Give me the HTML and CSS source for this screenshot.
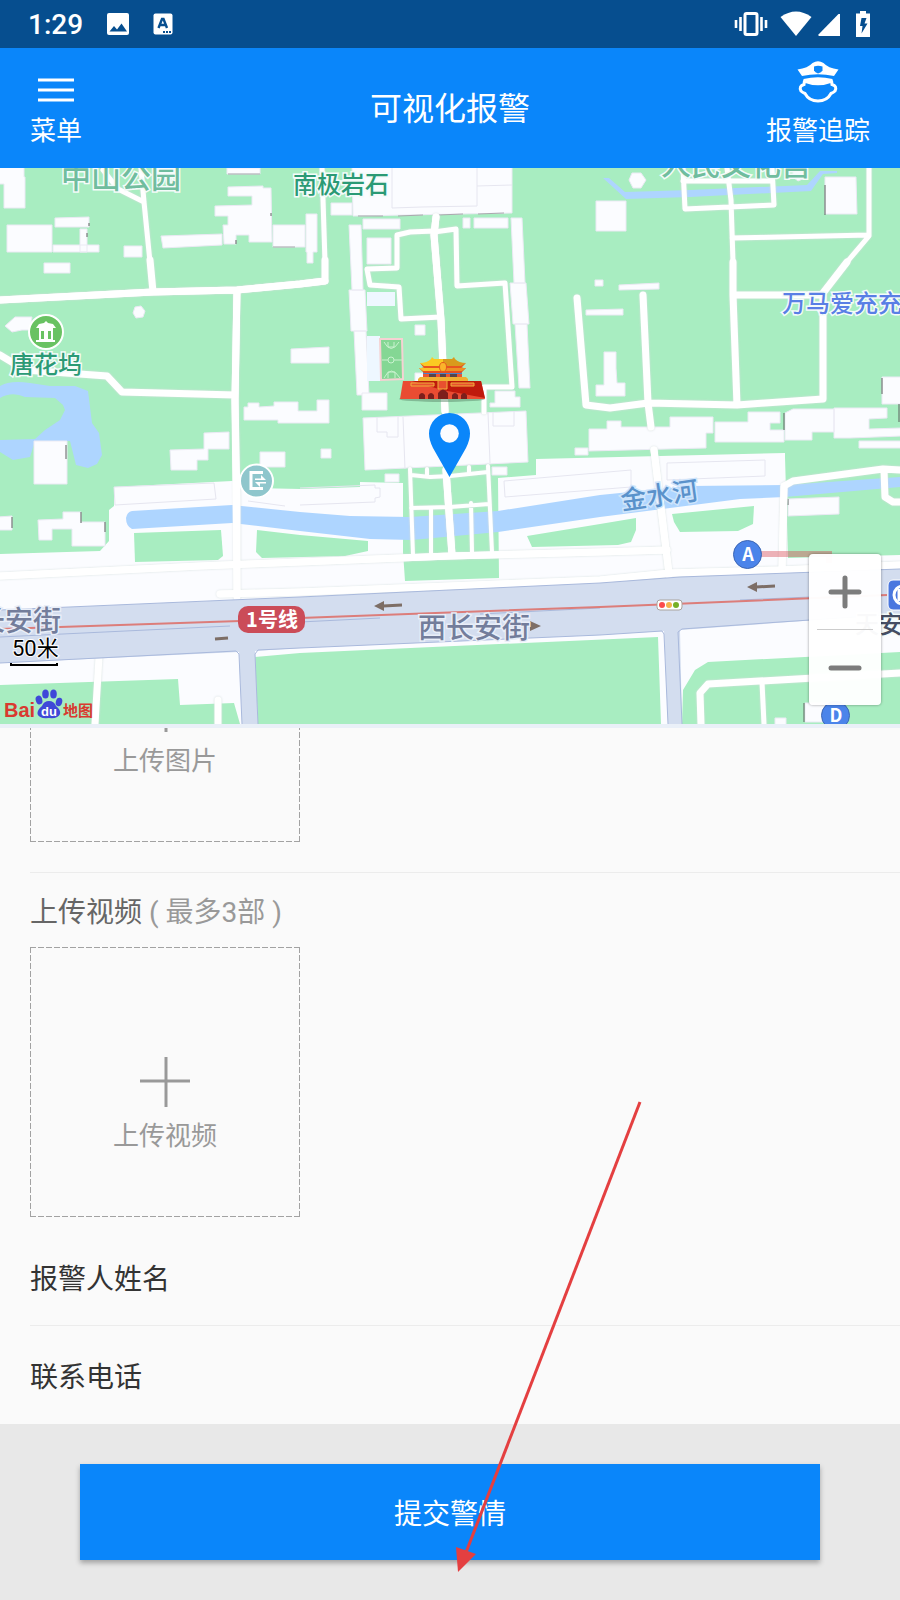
FILE: index.html
```html
<!DOCTYPE html>
<html lang="zh-CN">
<head>
    <meta charset="UTF-8">
    <meta name="viewport" content="width=device-width, initial-scale=1.0">
    <title>可视化报警</title>
    <link rel="stylesheet" href="styles.css">
</head>
<body>

<!-- 状态栏 -->
<div class="status-bar">
    <div class="status-left">
        <span class="clock">1:29</span>
        <svg width="24" height="24" viewBox="0 0 24 24">
            <rect x="1" y="1" width="22" height="22" rx="2" fill="#fff"/>
            <path d="M3.500 19.500 L8 14 L11 17.500 L15.500 11.500 L21 19.500 Z" fill="#064e8f"/>
        </svg>
        <svg width="20" height="24" viewBox="0 0 20 24">
            <rect x="0.500" y="1.500" width="19" height="21" rx="2" fill="#fff"/>
            <path d="M5.500 16 L9 7 H10.500 L14 16 M7 13 H12.500" fill="none" stroke="#064e8f" stroke-width="2.400"/>
            <path d="M10 20 H12 M13 20 H15 M16 20 H18" stroke="#064e8f" stroke-width="2"/>
        </svg>
    </div>
    <div class="status-right">
        <svg width="34" height="26" viewBox="0 0 34 26">
            <rect x="11" y="2.500" width="12" height="21" rx="1.500" fill="none" stroke="#fff" stroke-width="3"/>
            <path d="M6.500 6 V20 M2 9 V17 M27.500 6 V20 M32 9 V17" stroke="#fff" stroke-width="2.600"/>
        </svg>
        <svg width="32" height="26" viewBox="0 0 32 26">
            <path d="M0.500 6 Q16 -5 31.500 6 L16 25 Z" fill="#fff"/>
        </svg>
        <svg width="22" height="24" viewBox="0 0 22 24">
            <path d="M22 2 V24 H1 Q0 23.500 0.500 22.500 L20.500 2 Z" fill="#fff"/>
        </svg>
        <svg class="battery" width="14" height="26" viewBox="0 0 14 26">
            <path d="M4 0 H10 V2.500 H14 V26 H0 V2.500 H4 Z" fill="#fff"/>
            <path d="M5.500 7 H10.500 L8.500 12.500 H11.500 L5.500 22.500 L6.500 15 H4 Z" fill="#064e8f"/>
        </svg>
    </div>
</div>

<!-- 页面头部 -->
<header class="header">
    <button type="button" class="nav-button">
        <svg width="36" height="44" viewBox="0 0 36 44">
            <path d="M0 20 H36 M0 30 H36 M0 40 H36" transform="translate(0 -1)" stroke="#fff" stroke-width="3"/>
        </svg>
        <span>菜单</span>
    </button>
    <h1>可视化报警</h1>
    <button type="button" class="nav-button nav-right">
        <svg width="42" height="44" viewBox="0 0 42 44">
            <path d="M0.500 8.500 Q11 7 15.500 2 Q21 -1.500 26.500 2 Q31 7 41.500 8.500 L37 15 Q21 11.500 5 15 Z" fill="#fff"/>
            <path d="M17 5.500 Q21 4 25.500 5.500 V9.500 Q24.500 11.500 21 12.500 Q18 11.500 17 9.500 Z" fill="#0a86fa"/>
            <path d="M6.500 18 Q21 14.500 35.500 18 V21.500 Q21 27 6.500 21.500 Z" fill="#fff"/>
            <path d="M7.500 19.500 L7 23.500 Q1.500 25 4 30 Q5.500 31.500 8 32.500 Q12 40 21 40 Q30 40 34 32.500 Q36.500 31.500 38 30 Q40.500 25 35 23.500 L34.500 19.500" fill="none" stroke="#fff" stroke-width="3"/>
        </svg>
        <span>报警追踪</span>
    </button>
</header>

<!-- 地图 -->
<section class="map">
    <svg class="map-canvas" viewBox="0 168 900 556">
        <rect x="0" y="168" width="900" height="556" fill="#a8edc1"/>

        <!-- 街区底色 -->
        <path fill="#fbfcff" d="M0 554 L100 551 L109 541 V510 L114 506 V487 L232 481 L252 488 L300 489 L360 487 V482 L403 483 V552 L405 581 L499 578 L498 478 L536 475 V459 L785 453 L785 457 L788 558 L900 555 V652 L708 662 L695 670 L683 690 L682 724 H661 L658 637 L300 653 L255 657 L258 724 H240 L234 703 L180 705 L178 679 L0 685 Z"/>
        <g fill="#a8edc1">
            <path d="M134 533 L221 530 L223 556 L218 560 L135 562 Z"/>
            <path d="M257 530 L300 535 L368 541 V551 L345 556 L262 558 L256 552 Z"/>
            <path d="M527 536 L600 524 L636 518 V530 L631 542 L618 545 L532 547 Z"/>
            <path d="M672 514 L754 506 L753 524 L738 531 L680 532 L674 522 Z"/>
        </g>
        <path d="M403 466 H498 V556 L404 558 Z" fill="#a8edc1"/>

        <!-- 水系 -->
        <g fill="#aed5ff">
            <path d="M132 511 L232 505 L300 512 L350 516 L410 517 L498 511 L600 495 L690 486 L785 485 L900 477 V487 L785 497 L740 499 L600 517 L498 532 L412 540 L370 539 L300 531 L232 523 L132 529 Q126 526 126 518 Q127 512 132 511 Z"/>
            <path d="M0 386 Q10 380 30 383 L50 386 H75 L88 391 L92 423 L99 433 L102 455 L97 464 L88 468 L76 465 L70 441 H35 L30 457 L13 460 L0 452 Z"/>
            <path d="M603 178 H609 L625 192 L690 190 L807 185 L820 171 H837 V173 L823 174 L811 191 L690 197 L626 199 Z"/>
        </g>
        <path d="M0 398 Q12 391 25 397 L55 398 L63 405 L65 410 L60 420 L45 430 L35 439 L0 440 Z" fill="#a8edc1"/>

        <!-- 建筑 -->
        <g fill="#fbfcff" stroke="#ebeaf4">
            <path d="M-2 167 H24 V177 H25 V208 H4 V184 H-2 Z"/>
            <path d="M7 225 H52 V252 H7 Z M55 218 L89 217 V227 H55 Z M80 229 H87 V252 H80 Z M53 245 H99 V252 H53 Z M124 246 H142 V257 H124 Z M44 263 H70 V273 H44 Z"/>
            <path d="M161 236 L222 234 V245 L163 248 Z M273 225 H305 V247 H273 Z M306 214 H317 V252 H313 V263 H307 V252 H306 Z M227 168 H260 V174 H227 Z"/>
            <path d="M228 187 L263 186 V188 H271 L272 242 H249 V235 H236 V244 H224 L223 225 H228 V216 H215 V206 L252 205 V196 H228 Z"/>
            <path d="M5 326 L15 317 H32 L30 330 H22 L12 332 Z M135 307 L141 306 L145 311 L143 317 L136 318 L133 313 Z"/>
            <path d="M34 441 H67 V484 H34 Z M204 433 L229 432 V449 H208 V460 H197 V470 H171 L170 450 L204 449 Z"/>
            <path d="M-2 517 L12 516 V530 H-2 Z M38 520 L63 519 V512 H81 V522 H105 V546 H72 V529 H52 V540 H39 Z M260 452 H285 V467 H260 Z"/>
            <path d="M291 349 L329 347 V363 H291 Z M244 407 H248 V403 H259 V407 L274 406 V402 H298 V411 H317 V400 H329 V423 H278 V420 H244 Z"/>
            <path d="M331 203 H352 V215 H331 Z M352 167 H512 V213 L353 216 Z M363 219 H400 V229 H363 Z M463 218 H470 V228 H463 Z M474 218 H508 V228 H474 Z"/>
            <path d="M349 225 H361 L363 290 H352 Z M349 290 H365 L367 331 H351 Z M354 331 H366 L369 395 H357 Z"/>
            <path d="M511 218 H522 L525 283 H514 Z M510 283 H526 L529 324 H513 Z M515 324 H527 L530 388 H519 Z"/>
            <path d="M367 238 H391 V264 H367 Z M415 325 H425 V335 H415 Z M415 373 H425 V383 H415 Z M362 393 H387 V410 H362 Z M495 391 H515 V397 H520 V407 H490 V403 H495 Z"/>
            <path d="M363 418 L526 411 L528 462 L365 470 Z M321 449 H331 V458 H321 Z M385 474 H399 V482 H385 Z M492 467 H507 V475 H492 Z M575 448 H588 V455 H575 Z"/>
            <path d="M632 173 H641 L646 180 L641 188 H633 L629 180 Z M793 168 H805 V178 L798 181 L793 177 Z M596 201 H626 V231 H596 Z M825 177 H856 L857 214 H825 Z"/>
            <path d="M619 285 L659 283 V289 L619 290 Z M586 310 L623 309 V315 H586 Z M595 280 H603 V286 H595 Z M604 352 H616 V368 L617 383 H625 V396 H596 V385 H604 Z M882 377 H902 V404 H882 Z"/>
            <path d="M589 429 H607 V421 H621 V427 H670 V417 H713 V433 H706 V448 L589 451 Z M715 422 H748 V412 H780 V423 H770 V430 H784 V442 H715 Z"/>
            <path d="M785 413 L793 409 H834 V432 H812 V440 H785 Z M834 408 H887 V418 L869 419 V429 L902 428 V436 L850 438 H834 Z M859 441 H902 V448 H859 Z"/>
            <path d="M788 499 L839 497 V514 L788 516 Z M775 718 H786 V726 H775 Z M805 703 H830 V722 H805 Z"/>
        </g>
        <g fill="none" stroke="#e6e6f0">
            <path d="M392 168 V208 L422 207 L477 206 V168 M477 186 L512 185 M403 417 L405 469 M488 413 L490 463 M377 417 V432 H387 V437 H398 V416 M493 412 V426 H514 V411"/>
            <path d="M114 487 L214 483 L216 499 L115 505 Z M248 501 L285 506 M300 505 L375 502 V498 L380 497 V488 H375 V485 L300 488 M504 481 L631 470 V487 L505 497 Z M667 463 L765 460 V476 L667 480 Z"/>
        </g>
        <path d="M358 216 H383 M398 216 L423 215 M438 215 L463 214 M478 214 L504 213 M273 247 H295 M228 174 H260" stroke="#a9a9ad"/>
        <path d="M825 185 V215 M784 413 V430 M882 378 V394 M899 404 V422 M89 223 V226 M87 233 V237 M271 213 V216 M236 240 V244 M66 445 V459 M81 512 V523 M105 522 V532 M12 517 V528 M804 703 V722 M788 499 V505" stroke="#5c605f"/>

        <!-- 球场 -->
        <path d="M367 292 H395 V306 H367 Z M367 336 H380 V381 H367 Z" fill="#eef7ff"/>
        <path d="M380 339 H402 L403 379 L381 380 Z" fill="#84d794" stroke="#f5d2d3" stroke-width="2"/>
        <g fill="none" stroke="#c9f2cf">
            <circle cx="391" cy="360" r="3"/>
            <path d="M382 360 H388 M394 360 H402 M384 342 Q391 355 399 342 M384 378 Q391 364 400 378 M388 342 V347 H394 V342 M388 378 V372 H395 V378"/>
        </g>

        <!-- 园区道路 -->
        <g class="road">
            <path stroke-width="5" d="M103 170 L118 189 L144 202 M141 168 L144 202 L150 262"/>
            <path stroke-width="7" d="M150 260 L153 292 M0 300 L153 292 L237 290 L300 284 L325 281 V260 M237 290 L235 400 L237 500 V597 M0 355 L25 370 L107 376 L122 392 L235 395"/>
            <path stroke-width="5" d="M325 262 L322 168 M434 231 L410 232 L397 235 V268 L367 269 L370 285 L399 287 L401 319 L441 317 M434 232 L456 229 L457 286 L505 283 L512 387 H484 V412"/>
            <path stroke-width="7" d="M436 217 L434 235 L441 320 L445 411 M577 298 L586 405 L610 408 L648 403 L737 405 L823 399 V293 L847 262 M643 295 L648 403 L651 427 M654 450 L669 575 M733 262 L733 295 L737 405 M733 295 H823"/>
            <path stroke-width="5" d="M847 262 L869 236 V168 M727 168 L731 200 L733 262 M732 238 L869 235 M683 168 L685 209 L774 205 L772 168 M683 181 H772"/>
            <path stroke-width="4" d="M410 469 L413 555 M431 508 V553 M471 503 L472 552 M488 466 L492 552 M411 475 L430 477 L450 476 L488 472 M411 508 L450 507 L489 504 M427 469 V477 M469 467 V474"/>
            <path stroke-width="7" d="M446 470 L452 555 M782 570 L784 486 L793 481 L883 469 L900 470 M884 470 L885 497 L893 502 H900"/>
            <path stroke-width="7" d="M0 576 L200 566 L300 562 L450 556 L600 552 L667 550 M220 594 L300 592 L600 580 L670 573 L780 570 L900 565"/>
            <path stroke-width="7" d="M99 657 L95 724 M218 700 V724 M701 724 L700 693 L708 684 L900 673"/>
            <path stroke-width="5" d="M762 682 L764 724"/>
        </g>
        <g class="road-top">
            <path stroke-width="7" d="M0 576 L200 566 L300 562 L450 556 L600 552 L667 550 M220 594 L300 592 L600 580 L670 573 L780 570 L900 565 M237 290 L235 400 L237 594 M654 450 L669 573 M782 570 L784 486 M0 300 L153 292 L237 290 L300 284 L325 281 M436 217 L434 235 L441 320 L445 411 M446 470 L452 555"/>
        </g>

        <!-- 西长安街 -->
        <path fill="#d3ddef" d="M0 610 L300 597 L600 583 L680 577 L900 569 V614 L680 630 L682 724 H668 L664 631 L600 635 L300 648 L255 651 L258 724 H242 L239 652 L0 663 Z"/>
        <path fill="none" stroke="#a9b9dc" d="M0 610 L300 597 L600 583 L680 577 L900 569 M0 663 L236 651 L239 654 L242 724 M258 724 L255 654 L258 650 L300 648 L600 635 L662 631 L664 634 L668 724 M682 724 L678 632 L682 629 L780 622 L900 614 M0 637 L230 626 M300 622 L380 618 M480 614 L600 608 M740 600 L810 597"/>
        <path d="M0 629 L240 621 L300 618 L600 607 L887 595" fill="none" stroke="#dc7d7a" stroke-width="2"/>
        <g fill="#7d6e66" stroke="#7d6e66">
            <path d="M374 606 L384 601 V611 Z M747 587 L757 582 V592 Z M541 626 L530 621 V631 Z" stroke="none"/>
            <path d="M383 606 L402 605 M756 587 L775 586 M215 639 L228 638" stroke-width="3"/>
        </g>

        <!-- 文字标注 -->
        <g class="label">
            <text x="61" y="188" font-size="30" fill="#70bd9e">中山公园</text>
            <text x="661" y="175" font-size="30" fill="#70bd9e">人民文化宫</text>
            <text x="293" y="193" font-size="24" fill="#2b9a75">南极岩石</text>
            <text x="10" y="373" font-size="24" fill="#2b9a75">唐花坞</text>
            <text x="782" y="312" font-size="24" fill="#597fe5">万马爱充充</text>
            <text x="622" y="510" font-size="26" fill="#5a92cb" class="label-water" transform="rotate(-8 622 510)">金水河</text>
            <text x="418" y="638" font-size="28" fill="#737d9b" class="label-street">西长安街</text>
            <text x="61" y="631" font-size="28" fill="#737d9b" class="label-street" text-anchor="end">长安街</text>
            <text x="855" y="633" font-size="24" fill="#454d63">天安门</text>
        </g>

        <!-- 兴趣点 -->
        <circle cx="46" cy="332" r="17" fill="#69c262" stroke="#fff" stroke-width="2"/>
        <path d="M36 328 L39 324 L44 323 L46 321 L48 323 L53 324 L56 328 H53 V340 H55 V342 H36 V340 H39 V328 Z" fill="#fff"/>
        <path d="M41 331 H44 V339 H41 Z M48 331 H51 V339 H48 Z" fill="#69c262"/>
        <circle cx="256.500" cy="481" r="16.500" fill="#8fc6cc" stroke="#fff" stroke-width="2"/>
        <path d="M263 472.500 H251 V488.500 H263" fill="none" stroke="#fff" stroke-width="3"/>
        <path d="M255 478.500 H261 V475 L266 480 H255 Z M266 482 H255 L260 487 V483.500 H266 Z" fill="#fff"/>

        <rect x="238" y="606" width="67" height="27" rx="10" fill="#cb4c58"/>
        <text x="272" y="627" class="badge-text" font-size="20">1号线</text>

        <path d="M761 554 H829 V563" fill="none" stroke="#d6404a" stroke-opacity="0.4" stroke-width="6"/>
        <g fill="#4b84ea" stroke="#3c66b4">
            <circle cx="747.500" cy="554.500" r="14"/>
            <circle cx="835.500" cy="715.500" r="14"/>
        </g>
        <text x="748" y="561" class="badge-text" font-size="18">A</text>
        <text x="836" y="722" class="badge-text" font-size="18">D</text>

        <rect x="657" y="600" width="25" height="10" rx="3" fill="#fff" stroke="#a9a39d"/>
        <circle cx="662" cy="605" r="3" fill="#fb4b4b"/>
        <circle cx="669" cy="605" r="3" fill="#f4b34a"/>
        <circle cx="676" cy="605" r="3" fill="#76b026"/>

        <rect x="888" y="580" width="30" height="30" rx="5" fill="#4a77df" stroke="#fff" stroke-width="1"/>
        <circle cx="903" cy="595" r="9" fill="none" stroke="#fff" stroke-width="3"/>
        <path d="M899 589 V601" stroke="#fff" stroke-width="3"/>

        <!-- 天安门 -->
        <ellipse cx="442" cy="399" rx="43" ry="3" fill="#5b8a6c" opacity="0.5"/>
        <path d="M403 381 H481 L485 399 H400 Z" fill="#ea4c32"/>
        <path d="M412 381 H481 L485 398 L442 390 Z" fill="#bf1a0c"/>
        <path d="M411 383 H434 V386 H411 Z M451 383 H474 V386 H451 Z M438 380 H447 V389 H438 Z" fill="#e8502f" stroke="#f0b13a"/>
        <path d="M438 399 V393 Q443 386 448 393 V399 Z M419 399 V395 Q422 391 425 395 V399 Z M428 399 V395 Q431 391 434 395 V399 Z M452 399 V395 Q455 391 458 395 V399 Z M461 399 V395 Q464 391 467 395 V399 Z" fill="#7d1f1c"/>
        <path d="M423 371 H462 V378 H423 Z" fill="#e95634"/>
        <path d="M423 371 H462 V374 H423 Z" fill="#4c83cd"/>
        <path d="M429 374 H436 V378 H429 Z M440 374 H446 V378 H440 Z M450 374 H457 V378 H450 Z" fill="#584449"/>
        <path d="M418 379 L420 377 H466 L468 379 V381 H418 Z" fill="#efb032"/>
        <path d="M419 368 Q424 368 426 366 H459 Q461 368 466 368 L461 373 H424 Z" fill="#e8501f"/>
        <path d="M419 368 Q424 368 426 366 H443 V371 H423 Z" fill="#fbc22a"/>
        <path d="M443 366 H459 Q461 368 466 368 L462 371 H443 Z" fill="#ec9124"/>
        <path d="M420 363 L425 365 H461 L466 363 L461 368 H424 Z" fill="#e8551f"/>
        <path d="M420 363 Q427 363 431 359 L432 357 L434 359 H443 V366 H424 Z" fill="#fbca22"/>
        <path d="M443 359 H452 L454 357 L455 359 Q459 363 466 363 L461 366 H443 Z" fill="#d99a1c"/>
        <ellipse cx="443" cy="367" rx="3.500" ry="4.500" fill="#fbb42b" stroke="#e4571f"/>

        <!-- 当前位置 -->
        <path d="M449.500 477 L433 448 Q429 440 429 433.500 A20.500 20.500 0 0 1 470 433.500 Q470 440 466 448 Z" fill="#0a86fa"/>
        <circle cx="449.500" cy="433.500" r="9.300" fill="#fbfcff"/>

        <!-- 比例尺 -->
        <text x="12" y="656" class="scale-text" font-size="22">50米</text>
        <path d="M11 663 V665 H57 V663" fill="none" stroke="#000" stroke-width="2"/>

        <!-- 百度地图标识 -->
        <text x="4" y="717" class="logo-text" font-size="20" fill="#d93a30">Bai</text>
        <text x="63" y="716" class="logo-text logo-cn" font-size="15" fill="#d93a30">地图</text>
        <g fill="#3f48d8">
            <ellipse cx="39" cy="700" rx="3.300" ry="4.500" transform="rotate(-15 39 700)"/>
            <ellipse cx="45.500" cy="694" rx="3.300" ry="4.500"/>
            <ellipse cx="53.500" cy="694" rx="3.300" ry="4.500"/>
            <ellipse cx="59" cy="702" rx="3.200" ry="4.300" transform="rotate(15 59 702)"/>
            <path d="M49 701 Q54 701 56 706 Q61 710 60 714 Q58 719 49 718 Q39 719 37.500 714 Q37 710 42 706 Q44 701 49 701 Z"/>
        </g>
        <text x="49" y="716" class="logo-text" font-size="13" fill="#fff" text-anchor="middle">du</text>
    </svg>
    <div class="zoom-control">
        <button type="button" aria-label="放大">
            <svg width="34" height="34" viewBox="0 0 34 34">
                <path d="M3 17 H31 M17 3 V31" stroke="#7c7c7c" stroke-width="5" stroke-linecap="round"/>
            </svg>
        </button>
        <hr>
        <button type="button" aria-label="缩小">
            <svg width="34" height="34" viewBox="0 0 34 34">
                <path d="M3 17 H31" stroke="#7c7c7c" stroke-width="5" stroke-linecap="round"/>
            </svg>
        </button>
    </div>
</section>

<!-- 报警表单，滚动到底部 -->
<form class="form">
    <div class="group">
        <button type="button" class="upload">
            <svg width="50" height="50" viewBox="0 0 50 50"><path d="M0 24 H50 M26 0 V50" stroke="#999" stroke-width="3"/></svg>
            <span>上传图片</span>
        </button>
    </div>
    <div class="group group-video">
        <h2>上传视频 <small>( 最多3部 )</small></h2>
        <button type="button" class="upload">
            <svg width="50" height="50" viewBox="0 0 50 50"><path d="M0 24 H50 M26 0 V50" stroke="#999" stroke-width="3"/></svg>
            <span>上传视频</span>
        </button>
    </div>
    <div class="row">
        <label for="name">报警人姓名</label>
        <input type="text" id="name">
    </div>
    <div class="row">
        <label for="phone">联系电话</label>
        <input type="tel" id="phone">
    </div>
</form>

<!-- 提交 -->
<footer class="footer">
    <button type="button" class="submit">提交警情</button>
</footer>

<!-- 指示箭头 -->
<svg class="pointer" width="190" height="476" viewBox="0 0 190 476">
    <path d="M186 2 L11 455" stroke="#e43f40" stroke-width="3"/>
    <path d="M4 472 L2 447 L22 454 Z" fill="#e43f40"/>
</svg>

</body>
</html>
```

FILE: styles.css
```css
/* 全局样式 */
* {
    box-sizing: border-box;
}
body {
    margin: 0;
    position: relative;
    display: flex;
    flex-direction: column;
    height: 100vh;
    overflow: hidden;
    font-family: Roboto, "Noto Sans CJK SC", sans-serif;
    background: #fafafa;
    color: #333;
}
button {
    padding: 0;
    border: 0;
    background: none;
    font-family: inherit;
    cursor: pointer;
}
svg {
    display: block;
    flex-shrink: 0;
}

/* 状态栏 */
.status-bar {
    display: flex;
    justify-content: space-between;
    align-items: center;
    height: 48px;
    padding: 0 30px 0 28px;
    background: #064e8f;
    color: #fff;
    flex-shrink: 0;
}
.status-left {
    display: flex;
    align-items: center;
    gap: 23px;
}
.status-right {
    display: flex;
    align-items: center;
    gap: 6px;
}
.status-right svg:first-child {
    margin-right: 6px;
}
.battery {
    margin-left: 10px;
}
.clock {
    font-size: 28px;
    font-weight: 500;
}

/* 页面头部 */
.header {
    display: grid;
    grid-template-columns: 1fr auto 1fr;
    align-items: center;
    height: 120px;
    padding: 0 30px 4px;
    background: #0a86fa;
    color: #fff;
    flex-shrink: 0;
}
.header h1 {
    margin: 0;
    font-size: 32px;
    font-weight: 400;
}
.nav-button {
    display: flex;
    flex-direction: column;
    align-items: center;
    gap: 6px;
    justify-self: start;
    color: #fff;
    font-size: 26px;
    line-height: 40px;
}
.nav-right {
    justify-self: end;
}

/* 地图 */
.map {
    position: relative;
    flex-shrink: 0;
    border-bottom: 4px solid #eaf0f8;
}
.map-canvas {
    width: 100%;
}
.road {
    fill: none;
    stroke: #fff;
    stroke-linecap: round;
    stroke-linejoin: round;
    filter: drop-shadow(0 0 1px #d5dfdd);
}
.road-top {
    fill: none;
    stroke: #fff;
    stroke-linecap: round;
}
.label {
    font-family: "Noto Sans CJK SC", sans-serif;
    font-weight: 500;
    stroke: #f4fbfa;
    stroke-width: 3px;
    paint-order: stroke;
}
.label-water {
    stroke: #cfe5fc;
}
.label-street {
    stroke: #e9eef8;
}
.badge-text {
    font-family: "Noto Sans CJK SC", sans-serif;
    font-weight: 700;
    fill: #fff;
    text-anchor: middle;
}
.scale-text {
    fill: #000;
    stroke: #fff;
    stroke-width: 2px;
    paint-order: stroke;
}
.logo-text {
    font-family: "Liberation Sans", sans-serif;
    font-weight: 700;
}
.logo-cn {
    font-family: "Noto Sans CJK SC", sans-serif;
}
.zoom-control {
    position: absolute;
    right: 19px;
    bottom: 19px;
    display: flex;
    flex-direction: column;
    width: 72px;
    background: rgba(255, 255, 255, 0.97);
    border-radius: 4px;
    box-shadow: 0 0 3px rgba(0, 0, 0, 0.4);
}
.zoom-control button {
    display: flex;
    justify-content: center;
    align-items: center;
    height: 75px;
}
.zoom-control hr {
    width: 56px;
    height: 1px;
    margin: 0 auto;
    border: 0;
    background: #ccc;
}

/* 表单 */
.form {
    flex: 1;
    min-height: 0;
    display: flex;
    flex-direction: column;
    justify-content: flex-end;
    overflow: hidden;
    padding-left: 30px;
}
.group {
    flex-shrink: 0;
    padding-bottom: 30px;
    border-bottom: 1px solid #ececec;
}
.group-video {
    padding-bottom: 11px;
    border-bottom: 0;
}
.group h2 {
    margin: 0;
    padding: 20px 0 14px;
    font-size: 28px;
    line-height: 40px;
    font-weight: 400;
    color: #666;
}
.group small {
    font-size: 28px;
    color: #999;
}
/* 虚线边框：每段 6px，间隔 2px */
.upload {
    display: flex;
    flex-direction: column;
    align-items: center;
    gap: 9px;
    width: 270px;
    height: 270px;
    padding-top: 110px;
    background:
        repeating-linear-gradient(90deg, #a2a2a2 0 6px, transparent 6px 8px) top / 100% 1px no-repeat,
        repeating-linear-gradient(90deg, #a2a2a2 0 6px, transparent 6px 8px) bottom / 100% 1px no-repeat,
        repeating-linear-gradient(#a2a2a2 0 6px, transparent 6px 8px) left / 1px 100% no-repeat,
        repeating-linear-gradient(#a2a2a2 0 6px, transparent 6px 8px) right / 1px 100% no-repeat;
    color: #999;
    font-size: 26px;
    line-height: 40px;
}
.row {
    display: flex;
    align-items: center;
    flex-shrink: 0;
    height: 98px;
    padding-right: 30px;
    border-bottom: 1px solid #ececec;
    font-size: 28px;
}
.row:last-child {
    border-bottom: 0;
}
.row input {
    flex: 1;
    min-width: 0;
    margin-left: 20px;
    border: 0;
    outline: 0;
    background: none;
    font: inherit;
}

/* 提交按钮 */
.footer {
    flex-shrink: 0;
    padding: 40px 80px;
    background: #e8e8e8;
}
.submit {
    display: block;
    width: 100%;
    height: 96px;
    background: #0a86fa;
    box-shadow: 0 3px 5px rgba(0, 0, 0, 0.3);
    color: #fff;
    font-size: 28px;
}

/* 指示箭头 */
.pointer {
    position: absolute;
    left: 50%;
    bottom: 24px;
    margin-left: 4px;
    pointer-events: none;
}
```
